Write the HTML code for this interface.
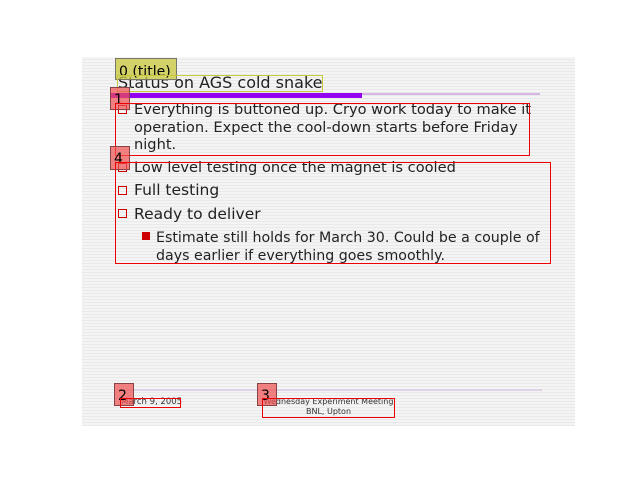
<!DOCTYPE html>
<html><head><meta charset="utf-8"><style>
body{margin:0;width:640px;height:480px;background:#fff;position:relative;overflow:hidden;font-family:"DejaVu Sans","Liberation Sans",sans-serif;}
.slide{position:absolute;left:82px;top:57px;width:493px;height:369px;background:repeating-linear-gradient(#f4f4f4 0 2px,#e9e9e9 2px 3px);}
.a{position:absolute;white-space:nowrap;color:#222;}
.t{font-size:14.6px;}
.cb{position:absolute;width:9px;height:9px;border:1.5px solid #c00;box-sizing:border-box;}
.box{position:absolute;box-sizing:border-box;}
.lbl{position:absolute;font-family:"DejaVu Sans",sans-serif;font-size:14px;color:#000;box-sizing:border-box;padding-left:3px;line-height:24px;}
</style></head><body>
<div class="slide"></div>
<div class="a" style="left:118px;top:73px;font-size:16px;">Status on AGS cold snake</div>
<div style="position:absolute;left:110px;top:93px;width:252px;height:5px;background:#9400f0"></div>
<div style="position:absolute;left:362px;top:93px;width:178px;height:2px;background:#d7b6e6"></div>
<div class="cb" style="left:118px;top:105px"></div>
<div class="a t" style="left:134px;top:101px;line-height:17.5px">Everything is buttoned up. Cryo work today to make it<br>operation. Expect the cool-down starts before Friday<br>night.</div>
<div class="cb" style="left:118px;top:163px"></div>
<div class="a t" style="left:134px;top:159px">Low level testing once the magnet is cooled</div>
<div class="cb" style="left:118px;top:186px"></div>
<div class="a" style="left:134px;top:181px;font-size:15.5px">Full testing</div>
<div class="cb" style="left:118px;top:209px"></div>
<div class="a" style="left:134px;top:205px;font-size:15.5px">Ready to deliver</div>
<div style="position:absolute;left:142px;top:232px;width:8px;height:8px;background:#c00"></div>
<div class="a" style="left:156px;top:229px;line-height:18px;font-size:14.2px">Estimate still holds for March 30. Could be a couple of<br>days earlier if everything goes smoothly.</div>
<div style="position:absolute;left:120px;top:389px;width:422px;height:2px;background:#ddd2e6"></div>
<div class="a" style="left:121px;top:397px;font-size:8.5px;color:#333">March 9, 2005</div>
<div class="a" style="left:262px;top:397px;width:133px;text-align:center;font-size:8px;line-height:10px;color:#333">Wednesday Experiment Meeting<br>BNL, Upton</div>

<div class="lbl" style="left:115px;top:58px;width:62px;height:22px;background:rgba(200,200,60,.75);border:1px solid #776;line-height:26px">0 (title)</div>
<div class="box" style="left:117px;top:75px;width:206px;height:17px;border:1px solid #c8c83c"></div>
<div class="lbl" style="left:110px;top:87px;width:20px;height:23px;background:rgba(240,80,80,.7);border:1px solid #844">1</div>
<div class="box" style="left:115px;top:103px;width:415px;height:53px;border:1px solid #e00"></div>
<div class="lbl" style="left:110px;top:146px;width:20px;height:24px;background:rgba(240,80,80,.7);border:1px solid #844">4</div>
<div class="box" style="left:115px;top:162px;width:436px;height:102px;border:1px solid #e00"></div>
<div class="lbl" style="left:114px;top:383px;width:20px;height:23px;background:rgba(240,80,80,.7);border:1px solid #844">2</div>
<div class="box" style="left:120px;top:398px;width:61px;height:10px;border:1px solid #e00"></div>
<div class="lbl" style="left:257px;top:383px;width:20px;height:23px;background:rgba(240,80,80,.7);border:1px solid #844">3</div>
<div class="box" style="left:262px;top:398px;width:133px;height:20px;border:1px solid #e00"></div>
</body></html>
